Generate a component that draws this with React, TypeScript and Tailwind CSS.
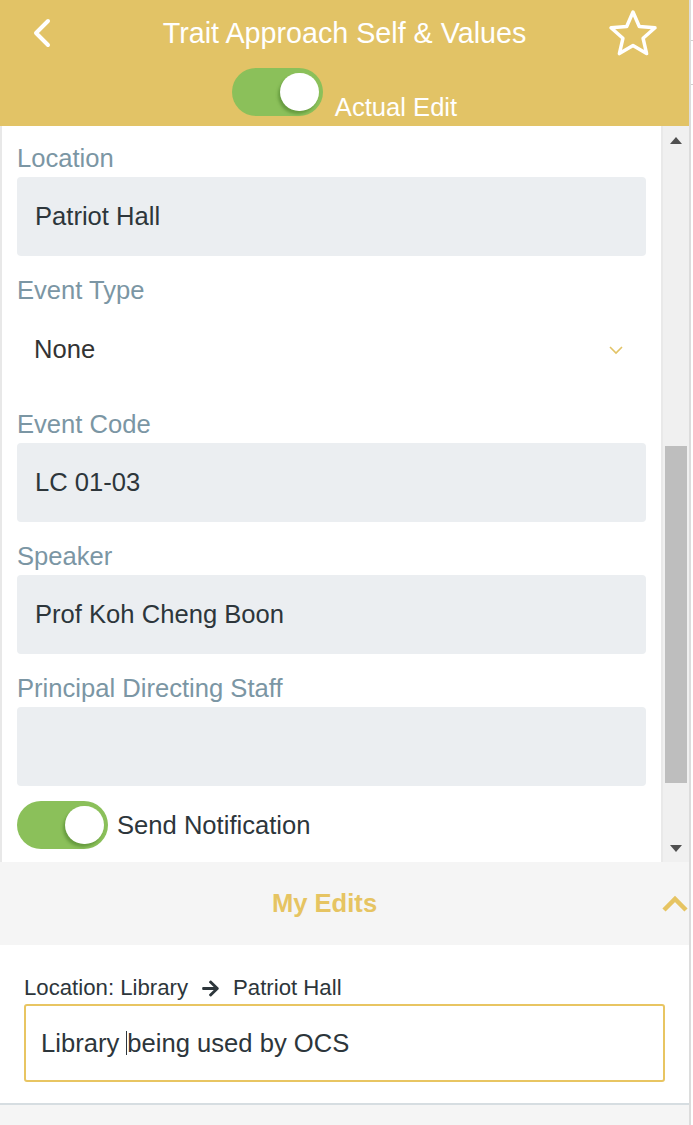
import { useState } from 'react';

const Toggle = ({ on }: { on: boolean }) => (
  <div className="relative h-[48px] w-[91px] shrink-0 rounded-full bg-[#8bc05a]">
    <div
      className={`absolute top-[5px] h-[38px] w-[39px] rounded-full bg-white shadow-[-2px_3px_3px_rgba(60,110,30,0.45)] ${
        on ? 'right-[4px]' : 'left-[4px]'
      }`}
    />
  </div>
);

const FieldLabel = ({ children }: { children: React.ReactNode }) => (
  <div className="h-[30px] text-[25.6px] leading-[30px] text-[#7b96a4]">{children}</div>
);

const TextBox = ({ value }: { value?: string }) => (
  <div className="mt-[4px] mb-[19px] flex h-[79px] items-center rounded-[4px] bg-[#ebeef1] px-[18px] text-[25.6px] text-[#2d363b]">
    {value}
  </div>
);

export default function App() {
  const [actualEdit] = useState(true);
  const [notify] = useState(true);

  return (
    <div className="flex h-[1125px] w-[693px] overflow-hidden bg-white font-['Liberation_Sans',Arial,sans-serif]">
      <div className="flex w-[689px] flex-col">
        {/* Header */}
        <header className="flex h-[126px] flex-col bg-[#e2c366] text-white">
          <div className="grid h-[66px] grid-cols-[1fr_auto_1fr] items-center">
            <div className="pl-[33px]">
              <svg width="18" height="30" viewBox="0 0 18 30" fill="none">
                <polyline points="15,3 3,15 15,27" stroke="white" strokeWidth="4" strokeLinecap="round" strokeLinejoin="round" />
              </svg>
            </div>
            <h1 className="text-[28.7px] leading-none">Trait Approach Self &amp; Values</h1>
            <div className="flex justify-end pr-[31px]">
              <svg width="50" height="48" viewBox="0 0 50 48" fill="none">
                <polygon
                  points="25,3 31.3,17.5 47,18.8 35.1,29.3 38.6,44.6 25,36.6 11.4,44.6 14.9,29.3 3,18.8 18.7,17.5"
                  stroke="white"
                  strokeWidth="3.5"
                  strokeLinejoin="round"
                />
              </svg>
            </div>
          </div>
          <div className="mt-[2px] flex h-[48px] items-center justify-center gap-[12px]">
            <Toggle on={actualEdit} />
            <span className="mb-[-5px] self-end text-[25.6px] leading-[28px]">Actual Edit</span>
          </div>
        </header>

        {/* Scrolling form */}
        <div className="flex h-[736px] border-l-2 border-[#e8e8e8]">
          <div className="flex-1 overflow-hidden px-[15px] pt-[17px]">
            <FieldLabel>Location</FieldLabel>
            <TextBox value="Patriot Hall" />

            <FieldLabel>Event Type</FieldLabel>
            <div className="mt-[4px] mb-[19px] flex h-[81px] items-center justify-between pl-[17px] pr-[22px] text-[25.6px] text-[#333]">
              <span>None</span>
              <svg width="16" height="10" viewBox="0 0 16 10" fill="none">
                <polyline points="2,2 8,8 14,2" stroke="#e2c366" strokeWidth="1.6" />
              </svg>
            </div>

            <FieldLabel>Event Code</FieldLabel>
            <TextBox value="LC 01-03" />

            <FieldLabel>Speaker</FieldLabel>
            <TextBox value="Prof Koh Cheng Boon" />

            <FieldLabel>Principal Directing Staff</FieldLabel>
            <TextBox />

            <div className="mt-[-4px] flex items-center gap-[9px]">
              <Toggle on={notify} />
              <span className="text-[25.6px] text-[#2d363b]">Send Notification</span>
            </div>
          </div>

          {/* Scrollbar */}
          <div className="flex w-[28px] flex-col border-l-2 border-[#e9e9e9] bg-[#f0f0f0]">
            <div className="flex h-[26px] items-center justify-center pt-[2px]">
              <div className="h-0 w-0 border-x-[6px] border-b-[7px] border-x-transparent border-b-[#505050]" />
            </div>
            <div className="mt-[294px] ml-[2px] h-[337px] w-[22px] bg-[#bebebe]" />
            <div className="flex flex-1 items-end justify-center pb-[10px]">
              <div className="h-0 w-0 border-x-[6px] border-t-[7px] border-x-transparent border-t-[#505050]" />
            </div>
          </div>
        </div>

        {/* My Edits */}
        <div className="flex h-[83px] items-center bg-[#f5f5f5]">
          <div className="flex-1 text-center text-[25.6px] font-bold text-[#e6c462]">My Edits</div>
          <div className="flex w-[40px] justify-end">
            <svg width="28" height="18" viewBox="0 0 28 18" fill="none">
              <polyline points="3,15 14,4 25,15" stroke="#e6c462" strokeWidth="4.5" strokeLinejoin="miter" />
            </svg>
          </div>
        </div>

        <div className="flex h-[160px] flex-col border-b-2 border-[#d6dde1] bg-white px-[24px] pt-[30px]">
          <div className="flex items-center text-[22.2px] leading-[26px] text-[#2d363b]">
            <span>Location: Library</span>
            <svg className="mx-[13px]" width="19" height="19" viewBox="0 0 448 512" fill="#2d363b">
              <path d="M190.5 66.9l22.2-22.2c9.4-9.4 24.6-9.4 33.9 0L441 239c9.4 9.4 9.4 24.6 0 33.9L246.6 467.3c-9.4 9.4-24.6 9.4-33.9 0l-22.2-22.2c-9.5-9.5-9.3-25 .4-34.3L311.4 296H24c-13.3 0-24-10.7-24-24v-32c0-13.3 10.7-24 24-24h287.4L190.9 101.2c-9.8-9.3-10-24.8-.4-34.3z" />
            </svg>
            <span>Patriot Hall</span>
          </div>
          <div className="mt-[3px] flex h-[78px] items-center rounded-[3px] border-2 border-[#e8c562] px-[15px] text-[25.6px] text-[#2d363b]">
            <span className="whitespace-pre">
              Library <span className="inline-block h-[24px] translate-y-[3px] border-l border-[#2d363b]" />being used by OCS
            </span>
          </div>
        </div>
        <div className="flex-1 bg-[#f5f5f5]" />
      </div>

      {/* Right edge strip */}
      <div className="flex w-[4px] flex-col border-l-2 border-[#dcdcdc] bg-white">
        <div className="mt-[40px] h-[1px] bg-[#cfcfcf]" />
        <div className="mt-[43px] h-[1px] bg-[#cfcfcf]" />
      </div>
    </div>
  );
}
